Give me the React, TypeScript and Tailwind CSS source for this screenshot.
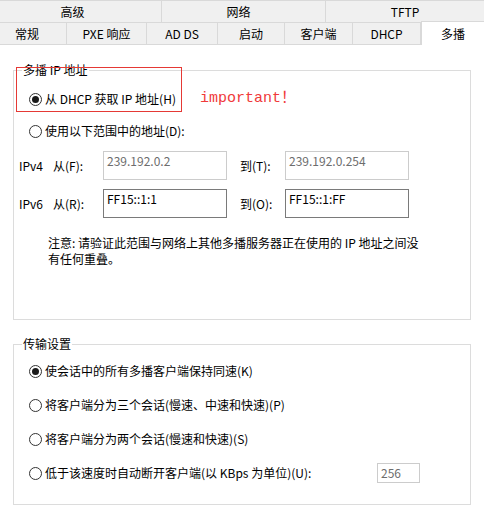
import React from "react";

function Radio({ checked, label, className = "" }: { checked?: boolean; label: string; className?: string }) {
  return (
    <div className={`flex items-center gap-[3px] h-[16px] ${className}`}>
      <span className="w-[13px] h-[13px] rounded-full border border-[#333333] bg-white flex items-center justify-center shrink-0">
        {checked && <span className="w-[7px] h-[7px] rounded-full bg-[#1a1a1a]" />}
      </span>
      <span className="whitespace-nowrap leading-[16px]">{label}</span>
    </div>
  );
}

function Field({ value, disabled, className = "" }: { value: string; disabled?: boolean; className?: string }) {
  return (
    <div
      className={`h-[29px] border pl-[3px] pt-[1px] leading-[16px] whitespace-nowrap ${
        disabled ? "border-[#cccccc] text-[#6d6d6d]" : "border-[#7a7a7a] text-black"
      } ${className}`}
    >
      {value}
    </div>
  );
}

const topTabs = [
  { label: "高级", w: "w-[162px] pr-[16px]" },
  { label: "网络", w: "w-[164px] pr-[10px]" },
  { label: "TFTP", w: "flex-1" },
];

const subTabs = [
  { label: "常规", w: "w-[67px] pr-[12px]" },
  { label: "PXE 响应", w: "w-[80px]" },
  { label: "AD DS", w: "w-[71px]" },
  { label: "启动", w: "w-[67px]" },
  { label: "客户端", w: "w-[68px]" },
  { label: "DHCP", w: "w-[68px]" },
];

export default function App() {
  return (
    <div className="w-[484px] h-[516px] bg-white overflow-hidden text-[12px] text-black font-['Noto_Sans_CJK_SC','Noto_Sans',sans-serif]">
      {/* tab strip */}
      <div className="flex flex-col">
        <div className="flex h-[23px] border-t border-b border-[#d9d9d9] bg-[#f0f0f0]">
          {topTabs.map((t, i) => (
            <div
              key={t.label}
              className={`${t.w} flex items-center justify-center ${i < 2 ? "border-r border-[#d9d9d9]" : ""}`}
            >
              {t.label}
            </div>
          ))}
        </div>
        <div className="flex h-[22px]">
          {subTabs.map((t) => (
            <div
              key={t.label}
              className={`${t.w} flex items-center justify-center bg-[#f0f0f0] border-r border-b border-[#d9d9d9]`}
            >
              {t.label}
            </div>
          ))}
          <div className="flex-1 -mt-[2px] h-[24px] bg-white border-l border-t border-[#d9d9d9] flex items-center justify-center relative">
            多播
          </div>
        </div>
      </div>

      {/* page body */}
      <div className="relative px-[13px] pt-[17px]">
        <div className="absolute left-[16px] top-[22px] w-[166px] h-[45px] border border-[#e53935] pointer-events-none" />

        <fieldset className="h-[258px] border border-[#dcdcdc]">
          <legend className="ml-[8px] px-[1px] leading-[16px]">多播 IP 地址</legend>

          <div className="flex items-center mt-[13px] ml-[15px]">
            <Radio checked label="从 DHCP 获取 IP 地址(H)" className="w-[171px]" />
            <span className="font-['Liberation_Mono','Noto_Sans_CJK_SC',monospace] text-[15px] leading-[16px] text-[#f03a3a]">
              important！
            </span>
          </div>
          <Radio label="使用以下范围中的地址(D):" className="mt-[16px] ml-[15px]" />

          <div className="flex items-center mt-[12px] ml-[5px]">
            <span className="w-[34px]">IPv4</span>
            <span className="w-[50px]">从(F):</span>
            <Field value="239.192.0.2" disabled className="w-[124px]" />
            <span className="w-[45px] ml-[13px]">到(T):</span>
            <Field value="239.192.0.254" disabled className="w-[124px]" />
          </div>
          <div className="flex items-center mt-[9px] ml-[5px]">
            <span className="w-[34px]">IPv6</span>
            <span className="w-[50px]">从(R):</span>
            <Field value="FF15::1:1" className="w-[124px]" />
            <span className="w-[45px] ml-[13px]">到(O):</span>
            <Field value="FF15::1:FF" className="w-[124px]" />
          </div>

          <p className="mt-[17px] ml-[34px] leading-[16px]">
            注意: 请验证此范围与网络上其他多播服务器正在使用的 IP 地址之间没
            <br />
            有任何重叠。
          </p>
        </fieldset>

        <fieldset className="mt-[16px] h-[169px] border border-[#dcdcdc]">
          <legend className="ml-[8px] px-[1px] leading-[16px]">传输设置</legend>
          <div className="flex flex-col gap-[14px] mt-[9px] ml-[15px]">
            <div className="h-[20px] flex items-center">
              <Radio checked label="使会话中的所有多播客户端保持同速(K)" />
            </div>
            <div className="h-[20px] flex items-center">
              <Radio label="将客户端分为三个会话(慢速、中速和快速)(P)" />
            </div>
            <div className="h-[20px] flex items-center">
              <Radio label="将客户端分为两个会话(慢速和快速)(S)" />
            </div>
            <div className="h-[20px] flex items-center">
              <Radio label="低于该速度时自动断开客户端(以 KBps 为单位)(U):" />
              <div className="ml-auto mr-[50px] w-[43px] h-[20px] border border-[#cccccc] text-[#6d6d6d] pl-[3px] leading-[18px]">
                256
              </div>
            </div>
          </div>
        </fieldset>
      </div>
    </div>
  );
}
